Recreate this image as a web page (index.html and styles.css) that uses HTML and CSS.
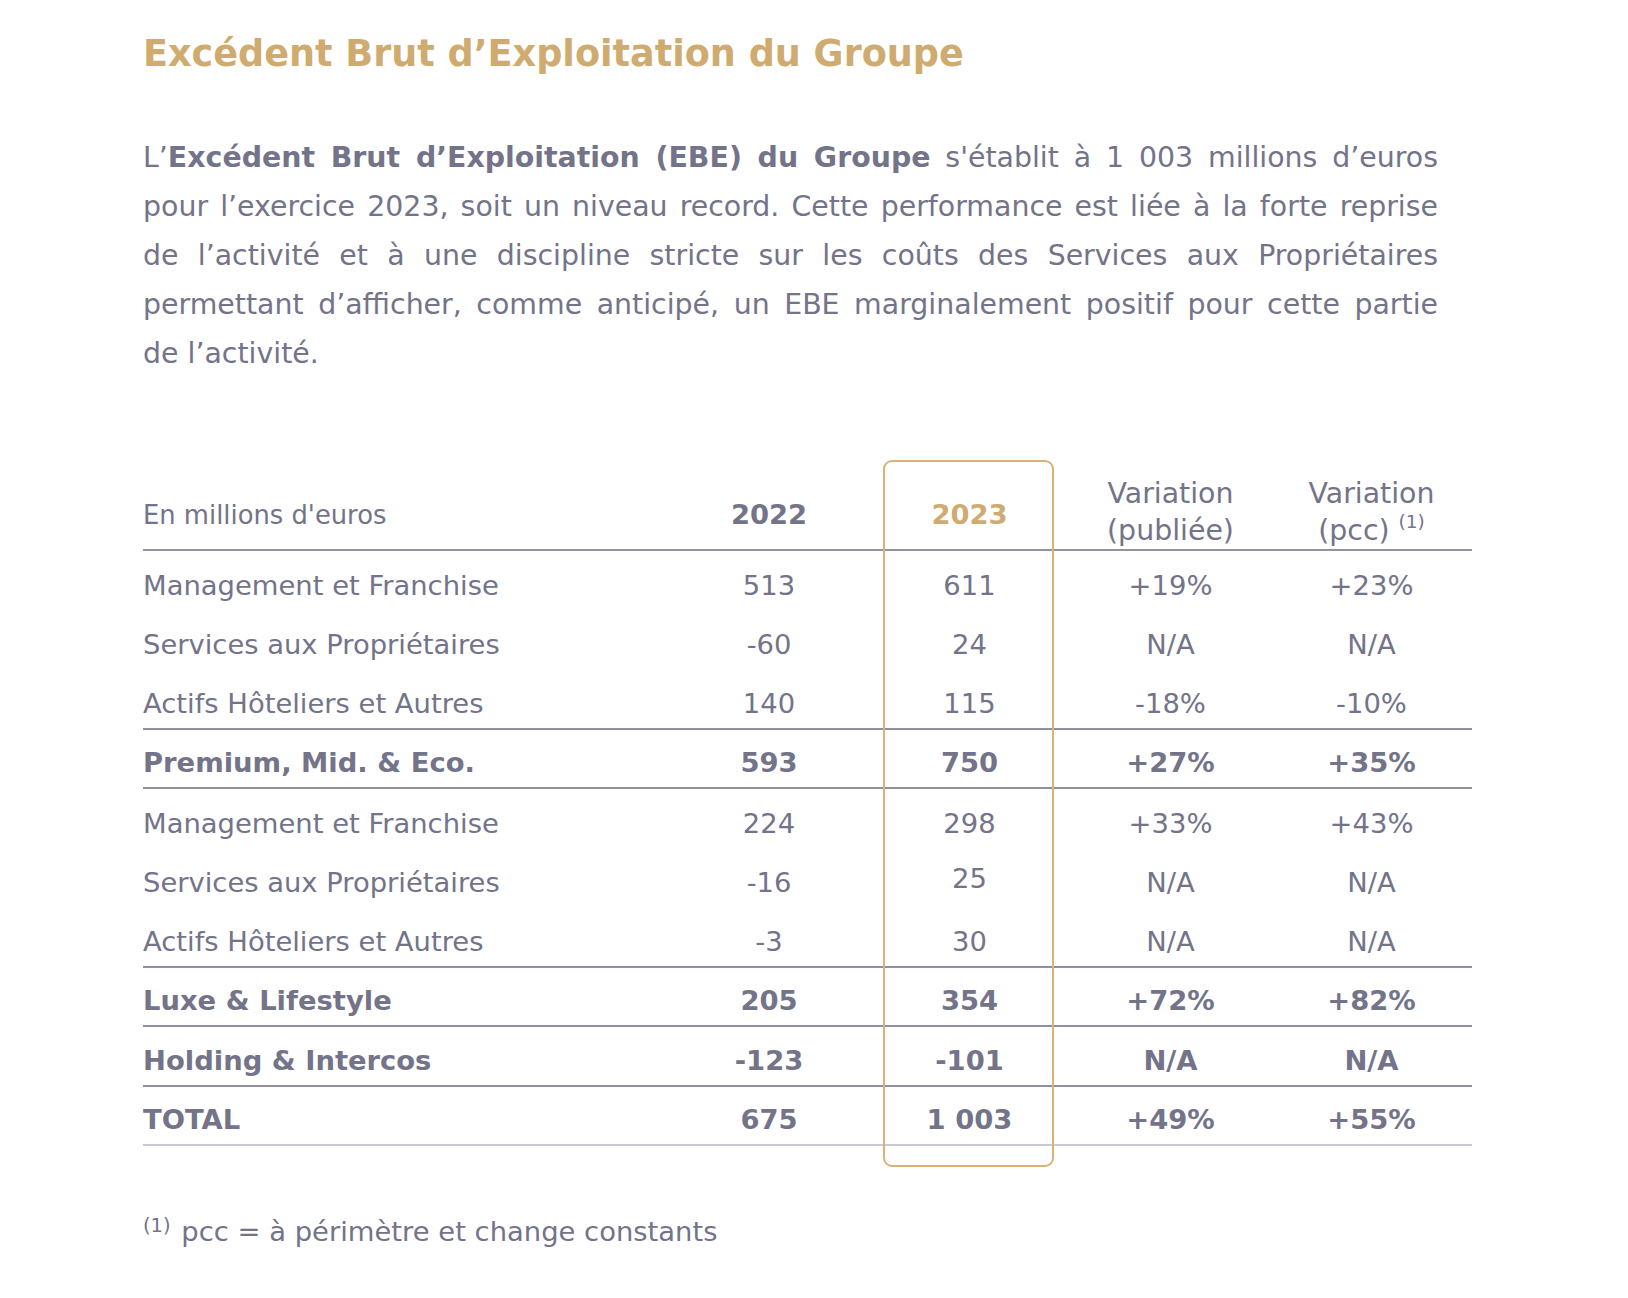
FILE: index.html
```html
<!DOCTYPE html>
<html lang="fr">
<head>
<meta charset="utf-8">
<title>Excédent Brut d’Exploitation du Groupe</title>
<link rel="stylesheet" href="styles.css">
</head>
<body>
<main class="page">
  <h1 class="title">Excédent Brut d’Exploitation du Groupe</h1>
  <p class="intro">
    <span class="line">L’<strong>Excédent Brut d’Exploitation (EBE) du Groupe</strong> s'établit à 1 003 millions d’euros</span>
    <span class="line">pour l’exercice 2023, soit un niveau record. Cette performance est liée à la forte reprise</span>
    <span class="line">de l’activité et à une discipline stricte sur les coûts des Services aux Propriétaires</span>
    <span class="line">permettant d’afficher, comme anticipé, un EBE marginalement positif pour cette partie</span>
    <span class="line last">de l’activité.</span>
  </p>

  <div class="table">
    <div class="highlight"></div>
    <div class="row head">
      <div class="cell label">En millions d'euros</div>
      <div class="cell num strong single">2022</div>
      <div class="cell num strong gold single">2023</div>
      <div class="cell num two">Variation<br>(publiée)</div>
      <div class="cell num two">Variation<br>(pcc) <sup class="ref">(1)</sup></div>
    </div>
    <div class="row">
      <div class="cell label">Management et Franchise</div>
      <div class="cell num">513</div><div class="cell num">611</div><div class="cell num">+19%</div><div class="cell num">+23%</div>
    </div>
    <div class="row">
      <div class="cell label">Services aux Propriétaires</div>
      <div class="cell num">-60</div><div class="cell num">24</div><div class="cell num">N/A</div><div class="cell num">N/A</div>
    </div>
    <div class="row ruled">
      <div class="cell label">Actifs Hôteliers et Autres</div>
      <div class="cell num">140</div><div class="cell num">115</div><div class="cell num">-18%</div><div class="cell num">-10%</div>
    </div>
    <div class="row ruled total">
      <div class="cell label">Premium, Mid. &amp; Eco.</div>
      <div class="cell num">593</div><div class="cell num">750</div><div class="cell num">+27%</div><div class="cell num">+35%</div>
    </div>
    <div class="row">
      <div class="cell label">Management et Franchise</div>
      <div class="cell num">224</div><div class="cell num">298</div><div class="cell num">+33%</div><div class="cell num">+43%</div>
    </div>
    <div class="row">
      <div class="cell label">Services aux Propriétaires</div>
      <div class="cell num">-16</div><div class="cell num raised">25</div><div class="cell num">N/A</div><div class="cell num">N/A</div>
    </div>
    <div class="row ruled">
      <div class="cell label">Actifs Hôteliers et Autres</div>
      <div class="cell num">-3</div><div class="cell num">30</div><div class="cell num">N/A</div><div class="cell num">N/A</div>
    </div>
    <div class="row ruled total">
      <div class="cell label">Luxe &amp; Lifestyle</div>
      <div class="cell num">205</div><div class="cell num">354</div><div class="cell num">+72%</div><div class="cell num">+82%</div>
    </div>
    <div class="row ruled total">
      <div class="cell label">Holding &amp; Intercos</div>
      <div class="cell num">-123</div><div class="cell num">-101</div><div class="cell num">N/A</div><div class="cell num">N/A</div>
    </div>
    <div class="row ruled total last">
      <div class="cell label">TOTAL</div>
      <div class="cell num">675</div><div class="cell num">1 003</div><div class="cell num">+49%</div><div class="cell num">+55%</div>
    </div>
  </div>

  <p class="note"><sup class="ref">(1)</sup> pcc = à périmètre et change constants</p>
</main>
</body>
</html>
```

FILE: styles.css
```css
html, body {
  margin: 0;
  padding: 0;
  background: #ffffff;
}

body {
  font-family: "DejaVu Sans", Verdana, sans-serif;
  color: #737389;
}

.page {
  width: 1329px;
  padding: 32px 0 40px 143px;
}

.title {
  margin: 0;
  font-size: 36.6px;
  line-height: 44px;
  font-weight: bold;
  color: #cfab70;
}

.intro {
  margin: 57px 0 0;
  width: 1295px;
  font-size: 28.4px;
  line-height: 49px;
}

.intro .line {
  display: block;
  text-align: justify;
  text-align-last: justify;
}

.intro .line.last {
  text-align: left;
  text-align-last: left;
}

.intro strong {
  font-weight: bold;
}

.table {
  position: relative;
  margin-top: 82px;
  padding-top: 14px;
  width: 1329px;
  font-size: 27.4px;
}

.highlight {
  position: absolute;
  left: 740px;
  top: 0;
  bottom: -21px;
  width: 171px;
  box-sizing: border-box;
  border: 2px solid #d9b27a;
  border-radius: 9px;
  pointer-events: none;
}

.row {
  display: grid;
  grid-template-columns: 526px 200px 201px 201px 201px;
  height: 59.5px;
  box-sizing: border-box;
  align-items: center;
}

.row .cell {
  padding-top: 9px;
}

.row.ruled {
  border-bottom: 2px solid #8f8fa1;
}

.row.last {
  border-bottom-color: #c9c9d1;
}

.row.head {
  height: 77px;
  border-bottom: 2px solid #9292a3;
}

.row.head .cell {
  padding-top: 0;
}

.row.head .single {
  padding-top: 5px;
}

.row.head .two {
  line-height: 37px;
  font-size: 28.4px;
}

.cell.num {
  text-align: center;
}

.cell.label {
  white-space: nowrap;
}

.row.head .label {
  padding-top: 7px;
  font-size: 25.8px;
}

.strong,
.total .cell {
  font-weight: bold;
}

.gold {
  color: #cfab70;
}

.row .cell.raised {
  padding-top: 1px;
}

.ref {
  font-size: 18.5px;
  vertical-align: 12px;
  line-height: 0;
}

.note {
  margin: 66px 0 0;
  font-size: 27.4px;
  line-height: 40px;
}

.note .ref {
  font-size: 19.5px;
  vertical-align: 9px;
  margin-right: 2px;
}
```
